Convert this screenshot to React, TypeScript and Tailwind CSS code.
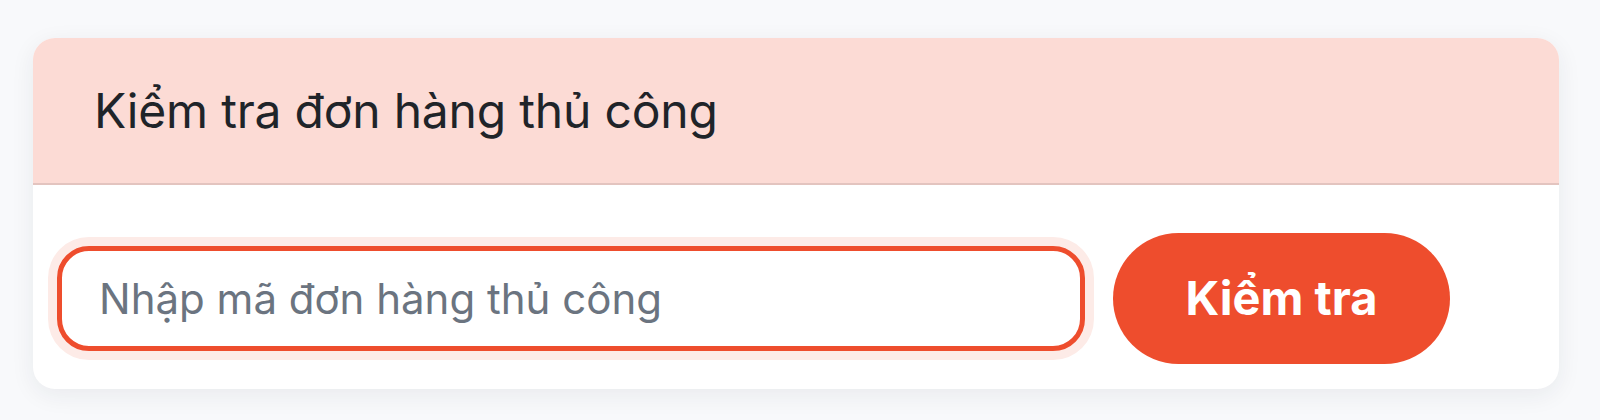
import React from "react";

export default function App() {
  return (
    <div className="min-h-[420px] w-[1600px] bg-[#f8f9fb] pt-[38px] pl-[33px] font-['Inter',sans-serif]">
      <div className="w-[1526px] overflow-hidden rounded-[22px] bg-white shadow-[0_6px_24px_rgba(30,40,60,0.07)]">
        <div className="flex h-[147px] items-center border-b-2 border-[#e3c4bf] bg-[#fcdbd5] pl-[61px]">
          <h2 className="text-[48px] font-normal leading-none tracking-[-0.2px] text-[#1f2429]">
            Kiểm tra đơn hàng thủ công
          </h2>
        </div>
        <div className="flex items-center gap-[28px] pl-[24px] pr-[109px] pt-[48px] pb-[25px]">
          <input
            type="text"
            placeholder="Nhập mã đơn hàng thủ công"
            className="h-[105px] flex-1 rounded-[32px] border-[5px] border-[#ee4d2d] bg-white px-[37px] text-[42px] text-[#1f2429] shadow-[0_0_0_9px_#fdebe7] outline-none placeholder:text-[#6b7480]"
          />
          <button className="h-[131px] w-[337px] rounded-full bg-[#ee4d2d] text-[47px] font-bold text-white">
            Kiểm tra
          </button>
        </div>
      </div>
    </div>
  );
}
